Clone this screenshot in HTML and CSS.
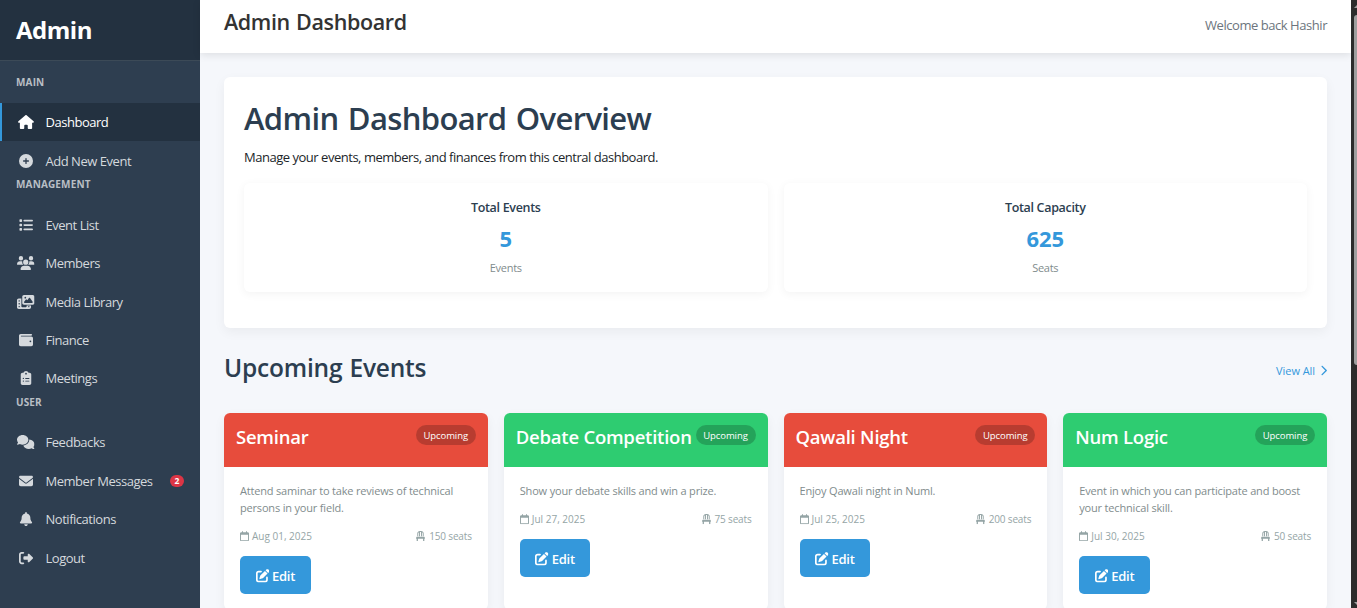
FILE: index.html
```html
<!DOCTYPE html>
<html lang="en">
<head>
<meta charset="utf-8">
<title>Admin Dashboard</title>
<link rel="stylesheet" href="styles.css">
</head>
<body>
<svg class="sprite" aria-hidden="true">
  <symbol id="house" viewBox="0 0 576 512"><path d="M575.8 255.5c0 18-15 32.1-32 32.1h-32l.7 160.2c0 2.7-.2 5.4-.5 8.1V472c0 22.1-17.9 40-40 40H456c-1.1 0-2.2 0-3.3-.1c-1.4 .1-2.8 .1-4.2 .1H416 392c-22.1 0-40-17.9-40-40V448 384c0-17.7-14.3-32-32-32H256c-17.7 0-32 14.3-32 32v64 24c0 22.1-17.9 40-40 40H160 128.1c-1.5 0-3-.1-4.5-.2c-1.2 .1-2.4 .2-3.6 .2H104c-22.1 0-40-17.9-40-40V360c0-.9 0-1.9 .1-2.8V287.6H32c-18 0-32-14-32-32.1c0-9 3-17 10-24L266.4 8c7-7 15-8 22-8s15 2 21 7L564.8 231.5c8 7 12 15 11 24z"/></symbol>
  <symbol id="plus" viewBox="0 0 512 512"><path d="M256 512A256 256 0 1 0 256 0a256 256 0 1 0 0 512zM232 344V280H168c-13.3 0-24-10.7-24-24s10.7-24 24-24h64V168c0-13.3 10.7-24 24-24s24 10.7 24 24v64h64c13.3 0 24 10.7 24 24s-10.7 24-24 24H280v64c0 13.3-10.7 24-24 24s-24-10.7-24-24z"/></symbol>
  <symbol id="list" viewBox="0 0 512 512"><path d="M40 48C26.7 48 16 58.7 16 72v48c0 13.3 10.7 24 24 24H88c13.3 0 24-10.7 24-24V72c0-13.3-10.7-24-24-24H40zM192 64c-17.7 0-32 14.3-32 32s14.3 32 32 32H480c17.7 0 32-14.3 32-32s-14.3-32-32-32H192zm0 160c-17.7 0-32 14.3-32 32s14.3 32 32 32H480c17.7 0 32-14.3 32-32s-14.3-32-32-32H192zm0 160c-17.7 0-32 14.3-32 32s14.3 32 32 32H480c17.7 0 32-14.3 32-32s-14.3-32-32-32H192zM16 232v48c0 13.3 10.7 24 24 24H88c13.3 0 24-10.7 24-24V232c0-13.3-10.7-24-24-24H40c-13.3 0-24 10.7-24 24zM40 368c-13.3 0-24 10.7-24 24v48c0 13.3 10.7 24 24 24H88c13.3 0 24-10.7 24-24V392c0-13.3-10.7-24-24-24H40z"/></symbol>
  <symbol id="users" viewBox="0 0 640 512"><path d="M144 0a80 80 0 1 1 0 160A80 80 0 1 1 144 0zM512 0a80 80 0 1 1 0 160A80 80 0 1 1 512 0zM0 298.7C0 239.8 47.8 192 106.7 192h42.7c15.9 0 31 3.5 44.6 9.7c-1.3 7.2-1.9 14.7-1.9 22.3c0 38.2 16.8 72.5 43.3 96c-.2 0-.4 0-.7 0H21.3C9.6 320 0 310.4 0 298.7zM405.3 320c-.2 0-.4 0-.7 0c26.6-23.5 43.3-57.8 43.3-96c0-7.6-.7-15-1.9-22.3c13.6-6.3 28.7-9.7 44.6-9.7h42.7C592.2 192 640 239.8 640 298.7c0 11.8-9.6 21.3-21.3 21.3H405.3zM224 224a96 96 0 1 1 192 0 96 96 0 1 1 -192 0zM128 485.3C128 411.7 187.7 352 261.3 352H378.7C452.3 352 512 411.7 512 485.3c0 14.7-11.9 26.7-26.7 26.7H154.7c-14.7 0-26.7-11.9-26.7-26.7z"/></symbol>
  <symbol id="media" viewBox="0 0 640 512"><path d="M256 0H576c35.3 0 64 28.7 64 64V288c0 35.3-28.7 64-64 64H256c-35.3 0-64-28.7-64-64V64c0-35.3 28.7-64 64-64zM476 106.7C471.5 100 464 96 456 96s-15.5 4-20 10.7l-56 84L362.7 169c-4.6-5.7-11.5-9-18.7-9s-14.2 3.3-18.7 9l-64 80c-5.8 7.2-6.9 17.1-2.9 25.4s12.4 13.6 21.6 13.6h80 48H552c8.9 0 17-4.9 21.2-12.7s3.7-17.3-1.2-24.6l-96-144zM336 96a32 32 0 1 0 -64 0 32 32 0 1 0 64 0zM64 128h96V384v32c0 17.7 14.3 32 32 32H320c17.7 0 32-14.3 32-32V384H512v64c0 35.3-28.7 64-64 64H64c-35.3 0-64-28.7-64-64V192c0-35.3 28.7-64 64-64zm8 64c-8.8 0-16 7.2-16 16v16c0 8.8 7.2 16 16 16H88c8.8 0 16-7.2 16-16V208c0-8.8-7.2-16-16-16H72zm0 104c-8.8 0-16 7.2-16 16v16c0 8.8 7.2 16 16 16H88c8.8 0 16-7.2 16-16V312c0-8.8-7.2-16-16-16H72zm0 104c-8.8 0-16 7.2-16 16v16c0 8.8 7.2 16 16 16H88c8.8 0 16-7.2 16-16V416c0-8.8-7.2-16-16-16H72zm336 16v16c0 8.8 7.2 16 16 16h16c8.8 0 16-7.2 16-16V416c0-8.8-7.2-16-16-16H424c-8.8 0-16 7.2-16 16z"/></symbol>
  <symbol id="wallet" viewBox="0 0 512 512"><path d="M64 32C28.7 32 0 60.7 0 96V416c0 35.3 28.7 64 64 64H448c35.3 0 64-28.7 64-64V192c0-35.3-28.7-64-64-64H80c-8.8 0-16-7.2-16-16s7.2-16 16-16H448c17.7 0 32-14.3 32-32s-14.3-32-32-32H64zM416 272a32 32 0 1 1 0 64 32 32 0 1 1 0-64z"/></symbol>
  <symbol id="clipboard" viewBox="0 0 384 512"><path d="M192 0c-41.8 0-77.4 26.7-90.5 64H64C28.7 64 0 92.7 0 128V448c0 35.3 28.7 64 64 64H320c35.3 0 64-28.7 64-64V128c0-35.3-28.7-64-64-64H282.5C269.4 26.7 233.8 0 192 0zm0 64a32 32 0 1 1 0 64 32 32 0 1 1 0-64zM72 272a24 24 0 1 1 48 0 24 24 0 1 1 -48 0zm104-16H304c8.8 0 16 7.2 16 16s-7.2 16-16 16H176c-8.8 0-16-7.2-16-16s7.2-16 16-16zM72 368a24 24 0 1 1 48 0 24 24 0 1 1 -48 0zm88 0c0-8.8 7.2-16 16-16H304c8.8 0 16 7.2 16 16s-7.2 16-16 16H176c-8.8 0-16-7.2-16-16z"/></symbol>
  <symbol id="comments" viewBox="0 0 640 512"><path d="M208 352c114.9 0 208-78.8 208-176S322.9 0 208 0S0 78.8 0 176c0 38.6 14.7 74.3 39.6 103.4c-3.5 9.4-8.7 17.7-14.2 24.7c-4.8 6.2-9.7 11-13.3 14.3c-1.8 1.6-3.3 2.9-4.3 3.7c-.5 .4-.9 .7-1.1 .8l-.2 .2C1 327.2-1.4 334.4 .8 340.9S9.1 352 16 352c21.8 0 43.8-5.6 62.1-12.5c9.2-3.5 17.8-7.4 25.2-11.4C134.1 343.3 169.8 352 208 352zM448 176c0 112.3-99.1 196.9-216.5 207C255.8 457.4 336.4 512 432 512c38.2 0 73.9-8.7 104.7-23.9c7.5 4 16 7.9 25.2 11.4c18.3 6.9 40.3 12.5 62.1 12.5c6.9 0 13.1-4.5 15.2-11.1c2.1-6.6-.2-13.8-5.8-17.9l-.2-.2c-.2-.2-.6-.4-1.1-.8c-1-.8-2.5-2-4.3-3.7c-3.6-3.3-8.5-8.1-13.3-14.3c-5.5-7-10.7-15.4-14.2-24.7c24.9-29 39.6-64.7 39.6-103.4c0-92.8-84.9-168.9-192.6-175.5c.4 5.1 .6 10.3 .6 15.5z"/></symbol>
  <symbol id="envelope" viewBox="0 0 512 512"><path d="M48 64C21.5 64 0 85.5 0 112c0 15.1 7.1 29.3 19.2 38.4L236.8 313.6c11.4 8.5 27 8.5 38.4 0L492.8 150.4c12.1-9.1 19.2-23.3 19.2-38.4c0-26.5-21.5-48-48-48H48zM0 176V384c0 35.3 28.7 64 64 64H448c35.3 0 64-28.7 64-64V176L294.4 339.2c-22.8 17.1-54 17.1-76.8 0L0 176z"/></symbol>
  <symbol id="bell" viewBox="0 0 448 512"><path d="M224 0c-17.7 0-32 14.3-32 32V51.2C119 66 64 130.6 64 208v18.8c0 47-17.3 92.4-48.5 127.6l-7.4 8.3c-8.4 9.4-10.4 22.9-5.3 34.4S19.4 416 32 416H416c12.6 0 24-7.4 29.2-18.9s3.1-25-5.3-34.4l-7.4-8.3C401.3 319.2 384 273.9 384 226.8V208c0-77.4-55-142-128-156.8V32c0-17.7-14.3-32-32-32zm45.3 493.3c12-12 18.7-28.3 18.7-45.3H224 160c0 17 6.7 33.3 18.7 45.3s28.3 18.7 45.3 18.7s33.3-6.7 45.3-18.7z"/></symbol>
  <symbol id="exit" viewBox="0 0 512 512"><path d="M377.9 105.9L500.7 228.7c7.2 7.2 11.3 17.1 11.3 27.3s-4.1 20.1-11.3 27.3L377.9 406.1c-6.4 6.4-15 9.9-24 9.9c-18.7 0-33.9-15.2-33.9-33.9l0-62.1-128 0c-17.7 0-32-14.3-32-32l0-64c0-17.7 14.3-32 32-32l128 0 0-62.1c0-18.7 15.2-33.9 33.9-33.9c9 0 17.6 3.6 24 9.9zM160 96L96 96c-17.7 0-32 14.3-32 32l0 256c0 17.7 14.3 32 32 32l64 0c17.7 0 32 14.3 32 32s-14.3 32-32 32l-64 0c-53 0-96-43-96-96L0 128C0 75 43 32 96 32l64 0c17.7 0 32 14.3 32 32s-14.3 32-32 32z"/></symbol>
  <symbol id="chevron" viewBox="0 0 320 512"><path d="M310.6 233.4c12.5 12.5 12.5 32.8 0 45.3l-192 192c-12.5 12.5-32.8 12.5-45.3 0s-12.5-32.8 0-45.3L242.7 256 73.4 86.6c-12.5-12.5-12.5-32.8 0-45.3s32.8-12.5 45.3 0l192 192z"/></symbol>
  <symbol id="calendar" viewBox="0 0 448 512"><path d="M152 24c0-13.3-10.7-24-24-24s-24 10.7-24 24V64H64C28.7 64 0 92.7 0 128v16 48V448c0 35.3 28.7 64 64 64H384c35.3 0 64-28.7 64-64V192 144 128c0-35.3-28.7-64-64-64H344V24c0-13.3-10.7-24-24-24s-24 10.7-24 24V64H152V24zM48 192H400V448c0 8.8-7.2 16-16 16H64c-8.8 0-16-7.2-16-16V192z"/></symbol>
  <symbol id="chair" viewBox="0 0 448 512"><path d="M248 48V256h48V58.7c23.9 13.8 40 39.7 40 69.3V256h48V128C384 57.3 326.7 0 256 0H192C121.3 0 64 57.3 64 128V256h48V128c0-29.6 16.1-55.5 40-69.3V256h48V48h48zM48 288c-12.1 0-23.2 6.8-28.6 17.7l-16 32c-5 9.9-4.4 21.7 1.4 31.1S20.9 384 32 384l0 96c0 17.7 14.3 32 32 32s32-14.3 32-32V384H352v96c0 17.7 14.3 32 32 32s32-14.3 32-32V384c11.1 0 21.4-5.7 27.2-15.2s6.4-21.2 1.4-31.1l-16-32C423.2 294.8 412.1 288 400 288H48z"/></symbol>
  <symbol id="pen" viewBox="0 0 512 512"><path d="M471.6 21.7c-21.9-21.9-57.3-21.9-79.2 0L362.3 51.7l97.9 97.9 30.1-30.1c21.9-21.9 21.9-57.3 0-79.2L471.6 21.7zm-299.2 220c-6.1 6.1-10.8 13.6-13.5 21.9l-29.6 88.8c-2.9 8.6-.6 18.1 5.8 24.6s15.9 8.7 24.6 5.8l88.8-29.6c8.2-2.7 15.7-7.4 21.9-13.5L437.7 172.3 339.7 74.3 172.4 241.7zM96 64C43 64 0 107 0 160V416c0 53 43 96 96 96H352c53 0 96-43 96-96V320c0-17.7-14.3-32-32-32s-32 14.3-32 32v96c0 17.7-14.3 32-32 32H96c-17.7 0-32-14.3-32-32V160c0-17.7 14.3-32 32-32h96c17.7 0 32-14.3 32-32s-14.3-32-32-32H96z"/></symbol>
</svg>

<div class="app">
  <aside class="sidebar">
    <div class="brand">Admin</div>
    <nav class="nav">
      <h6 class="nav-label">MAIN</h6>
      <a class="nav-item active"><span class="nav-icon"><svg class="w16"><use href="#house"/></svg></span><span>Dashboard</span></a>
      <a class="nav-item"><span class="nav-icon"><svg><use href="#plus"/></svg></span><span>Add New Event</span></a>
      <h6 class="nav-label">MANAGEMENT</h6>
      <a class="nav-item"><span class="nav-icon"><svg><use href="#list"/></svg></span><span>Event List</span></a>
      <a class="nav-item"><span class="nav-icon"><svg class="w18"><use href="#users"/></svg></span><span>Members</span></a>
      <a class="nav-item"><span class="nav-icon"><svg class="w18"><use href="#media"/></svg></span><span>Media Library</span></a>
      <a class="nav-item"><span class="nav-icon"><svg><use href="#wallet"/></svg></span><span>Finance</span></a>
      <a class="nav-item"><span class="nav-icon"><svg><use href="#clipboard"/></svg></span><span>Meetings</span></a>
      <h6 class="nav-label">USER</h6>
      <a class="nav-item"><span class="nav-icon"><svg class="w18"><use href="#comments"/></svg></span><span>Feedbacks</span></a>
      <a class="nav-item"><span class="nav-icon"><svg><use href="#envelope"/></svg></span><span>Member Messages</span><span class="count">2</span></a>
      <a class="nav-item"><span class="nav-icon"><svg><use href="#bell"/></svg></span><span>Notifications</span></a>
      <a class="nav-item"><span class="nav-icon"><svg><use href="#exit"/></svg></span><span>Logout</span></a>
    </nav>
  </aside>

  <div class="main">
    <header class="topbar">
      <h1 class="page-title">Admin Dashboard</h1>
      <span class="welcome">Welcome back Hashir</span>
    </header>

    <main class="content">
      <section class="overview">
        <h2 class="overview-title">Admin Dashboard Overview</h2>
        <p class="overview-text">Manage your events, members, and finances from this central dashboard.</p>
        <div class="stats">
          <div class="stat"><h3 class="stat-name">Total Events</h3><div class="stat-value">5</div><div class="stat-unit">Events</div></div>
          <div class="stat"><h3 class="stat-name">Total Capacity</h3><div class="stat-value">625</div><div class="stat-unit">Seats</div></div>
        </div>
      </section>

      <div class="section-head">
        <h2 class="section-title">Upcoming Events</h2>
        <a class="view-all">View All <svg><use href="#chevron"/></svg></a>
      </div>

      <div class="events">
        <article class="event">
          <div class="event-head red"><h3 class="event-name">Seminar</h3><span class="status">Upcoming</span></div>
          <div class="event-body">
            <p class="event-text">Attend saminar to take reviews of technical<br>persons in your field.</p>
            <div class="meta"><span><svg><use href="#calendar"/></svg>Aug 01, 2025</span><span class="seats"><svg><use href="#chair"/></svg>150 seats</span></div>
            <a class="edit"><svg><use href="#pen"/></svg>Edit</a>
          </div>
        </article>
        <article class="event">
          <div class="event-head green"><h3 class="event-name">Debate Competition</h3><span class="status">Upcoming</span></div>
          <div class="event-body">
            <p class="event-text">Show your debate skills and win a prize.</p>
            <div class="meta"><span><svg><use href="#calendar"/></svg>Jul 27, 2025</span><span class="seats"><svg><use href="#chair"/></svg>75 seats</span></div>
            <a class="edit"><svg><use href="#pen"/></svg>Edit</a>
          </div>
        </article>
        <article class="event">
          <div class="event-head red"><h3 class="event-name">Qawali Night</h3><span class="status">Upcoming</span></div>
          <div class="event-body">
            <p class="event-text">Enjoy Qawali night in Numl.</p>
            <div class="meta"><span><svg><use href="#calendar"/></svg>Jul 25, 2025</span><span class="seats"><svg><use href="#chair"/></svg>200 seats</span></div>
            <a class="edit"><svg><use href="#pen"/></svg>Edit</a>
          </div>
        </article>
        <article class="event">
          <div class="event-head green"><h3 class="event-name">Num Logic</h3><span class="status">Upcoming</span></div>
          <div class="event-body">
            <p class="event-text">Event in which you can participate and boost<br>your technical skill.</p>
            <div class="meta"><span><svg><use href="#calendar"/></svg>Jul 30, 2025</span><span class="seats"><svg><use href="#chair"/></svg>50 seats</span></div>
            <a class="edit"><svg><use href="#pen"/></svg>Edit</a>
          </div>
        </article>
      </div>
    </main>
  </div>

  <div class="scrollbar">
    <svg class="arrow" viewBox="0 0 3 3"><path d="M3 0L0 3H3Z"/></svg>
    <div class="thumb"></div>
    <svg class="arrow down" viewBox="0 0 3 3"><path d="M0 0H3V3Z"/></svg>
  </div>
</div>
</body>
</html>
```
FILE: styles.css
```css
* { box-sizing: border-box; }
body {
  margin: 0;
  height: 608px;
  overflow: hidden;
  background: #f5f7fb;
  color: #333;
  font-family: "Open Sans", "Noto Sans", sans-serif;
  font-size: 13px;
}
h1, h2, h3, h6, p { margin: 0; }
svg { fill: currentColor; }
.sprite { display: none; }
.app { display: flex; height: 608px; overflow: hidden; }

.sidebar { flex: none; width: 200px; background: #2e3e50; color: #d5d9dd; }
.brand {
  height: 61px;
  padding-left: 16px;
  background: #233140;
  border-bottom: 1px solid #3c4a57;
  color: #fff;
  font-size: 24px;
  font-weight: 700;
  line-height: 60px;
  letter-spacing: -.5px;
}
.nav { padding-top: 16px; }
.nav-label {
  height: 25.7px;
  padding-left: 16px;
  color: #b9bfc5;
  font-size: 10px;
  font-weight: 700;
  line-height: 9px;
  letter-spacing: .15px;
}
.nav-label:first-child { height: 26.1px; line-height: 10px; }
.nav-item {
  display: flex;
  align-items: center;
  height: 38.4px;
  padding: 0 16px 0 15px;
  border-left: 2px solid transparent;
  letter-spacing: -.47px;
}
.nav-item.active { background: #233140; border-left-color: #3498db; color: #fff; }
.nav-icon { display: flex; justify-content: center; width: 18px; margin-right: 10.5px; }
.nav-icon svg { width: 14px; height: 14px; }
.nav-icon .w16 { width: 16px; }
.nav-icon .w18 { width: 17.5px; }
.count {
  width: 14px;
  height: 12px;
  margin-left: auto;
  border-radius: 6px;
  background: #dc3545;
  color: #fff;
  font-size: 8.5px;
  font-weight: 700;
  line-height: 12px;
  text-align: center;
  letter-spacing: 0;
}

.main { flex: 1; min-width: 0; }
.topbar {
  display: flex;
  justify-content: space-between;
  height: 53px;
  padding: 0 24px;
  background: #fff;
  box-shadow: 0 2px 8px rgba(0, 0, 0, .1);
}
.page-title { font-size: 21.5px; font-weight: 600; line-height: 43px; letter-spacing: -.38px; word-spacing: 1px; }
.welcome { color: #6c757d; line-height: 51px; letter-spacing: -.45px; }
.content { padding: 24px; }

.overview {
  height: 251px;
  padding: 20px;
  border-radius: 6px;
  background: #fff;
  box-shadow: 0 4px 12px rgba(0, 0, 0, .05);
}
.overview-title {
  color: #2c3e50;
  font-size: 31px;
  font-weight: 600;
  line-height: 42px;
  letter-spacing: -.65px;
  word-spacing: 2px;
}
.overview-text { margin: 8px 0 15px; line-height: 21px; letter-spacing: -.48px; color: #212529; }
.stats { display: grid; grid-template-columns: 1fr 1fr; gap: 16px; }
.stat {
  height: 109px;
  padding-top: 15px;
  border-radius: 6px;
  background: #fff;
  box-shadow: 0 2px 10px rgba(0, 0, 0, .05);
  text-align: center;
}
.stat-name { color: #2c3e50; font-size: 12.5px; font-weight: 600; line-height: 20px; letter-spacing: -.32px; }
.stat-value { margin: 4px 0 7px; color: #3498db; font-size: 22px; font-weight: 700; line-height: 32px; }
.stat-unit { color: #7f8c8d; font-size: 11px; line-height: 14px; letter-spacing: -.25px; }

.section-head { display: flex; justify-content: space-between; align-items: center; height: 85px; padding-bottom: 1px; }
.section-title { color: #2c3e50; font-size: 24.5px; font-weight: 600; line-height: 34px; letter-spacing: -.2px; word-spacing: 1px; margin-top: -4px; }
.view-all { display: flex; align-items: center; color: #3498db; font-size: 11px; letter-spacing: -.06px; }
.view-all svg { width: 7px; height: 11px; margin-left: 5px; }

.events { display: grid; grid-template-columns: repeat(4, 1fr); gap: 16px; }
.event {
  height: 197px;
  overflow: hidden;
  border-radius: 6px;
  background: #fff;
  box-shadow: 0 4px 12px rgba(0, 0, 0, .05);
}
.event-head { display: flex; justify-content: space-between; height: 54px; padding: 12px; color: #fff; }
.red { background: #e74c3c; }
.green { background: #2ecc71; }
.event-name { font-size: 18.5px; font-weight: 600; line-height: 23px; letter-spacing: -.23px; white-space: nowrap; }
.status {
  width: 60px;
  height: 20px;
  border-radius: 10px;
  background: rgba(0, 0, 0, .2);
  font-size: 9.5px;
  line-height: 21px;
  text-align: center;
  letter-spacing: -.09px;
}
.event-body { padding: 16px; }
.event-text { color: #7f8c8d; font-size: 11px; line-height: 16.8px; letter-spacing: -.18px; }
.meta {
  display: flex;
  justify-content: space-between;
  margin: 12px 0 11.5px;
  color: #95a5a6;
  font-size: 10px;
  line-height: 15.5px;
}
.meta span { display: flex; align-items: center; }
.meta svg { width: 9px; height: 10.3px; margin-right: 3px; }
.meta .seats { letter-spacing: -.17px; }
.meta .seats svg { margin-right: 4px; }
.edit {
  display: inline-flex;
  align-items: center;
  justify-content: center;
  width: 70.5px;
  height: 38.4px;
  padding-top: 2px;
  border-radius: 5px;
  background: #3498db;
  color: #fff;
  font-size: 13px;
  font-weight: 600;
  letter-spacing: -.28px;
}
.edit svg { width: 13.5px; height: 13.5px; margin-right: 3px; }

.scrollbar { display: flex; flex-direction: column; justify-content: space-between; align-items: flex-end; flex: none; width: 6px; padding: 5px 0 3px; background: #2c2c2c; }
.arrow { width: 3px; height: 3px; fill: #9f9f9f; }
.thumb { width: 3px; height: 350px; margin: 7px 0 auto; border-radius: 3px 0 0 3px; background: #9f9f9f; }
```
